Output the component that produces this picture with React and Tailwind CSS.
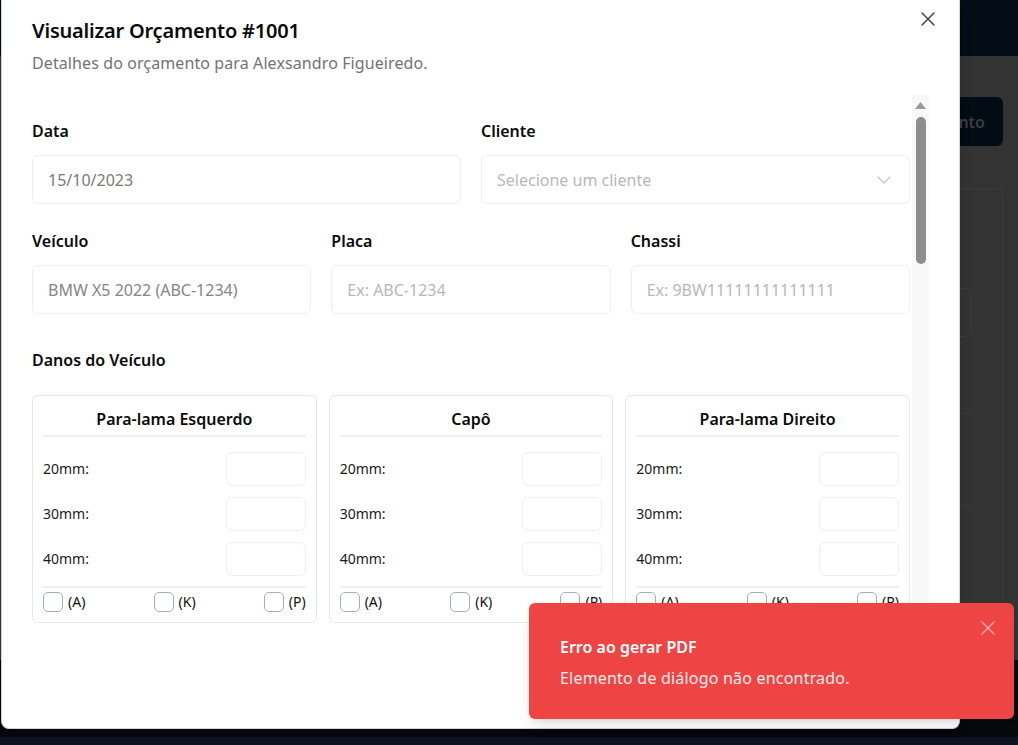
import React from "react";

const font = { fontFamily: '"Noto Sans", "Open Sans", sans-serif' };

function XIcon({ className }) {
  return (
    <svg viewBox="0 0 24 24" width="24" height="24" fill="none" stroke="currentColor" strokeWidth="1.5" strokeLinecap="round" className={className}>
      <path d="M18 6 6 18" />
      <path d="m6 6 12 12" />
    </svg>
  );
}

function ChevronDown({ className }) {
  return (
    <svg viewBox="0 0 24 24" width="24" height="24" fill="none" stroke="currentColor" strokeWidth="1.3" strokeLinecap="round" strokeLinejoin="round" className={className}>
      <path d="m6 9 6 6 6-6" />
    </svg>
  );
}

function Field({ label, children }) {
  return (
    <div className="flex flex-col gap-3">
      <div className="text-base leading-6 font-semibold text-[#0a0a0a]">{label}</div>
      {children}
    </div>
  );
}

function TextBox({ value, placeholder, muted }) {
  return (
    <div className="h-[49px] rounded-md border border-[#efefef] bg-white px-[15px] flex items-center text-base">
      {value ? (
        <span className={muted ? "text-[#7a7a7a]" : "text-[#858585]"}>{value}</span>
      ) : (
        <span className="text-[#b8b8b8]">{placeholder}</span>
      )}
    </div>
  );
}

function Checkbox({ label }) {
  return (
    <div className="flex items-center gap-[5px]">
      <div className="w-[20px] h-[20px] rounded-[5px] border-[1.5px] border-[#9fb0c3] bg-white" />
      <span className="text-sm leading-5 text-[#111]">{label}</span>
    </div>
  );
}

function DamageCard({ title }) {
  return (
    <div className="rounded-md border border-[#e5e7eb] bg-white px-[10px] pt-[11px] pb-[10px]">
      <div className="text-center text-base leading-6 font-semibold text-[#0a0a0a] pb-[4px] border-b-2 border-[#efefef]">
        {title}
      </div>
      <div className="mt-[15px] flex flex-col gap-[11px]">
        {["20mm:", "30mm:", "40mm:"].map((r) => (
          <div key={r} className="flex items-center justify-between">
            <span className="text-sm text-[#1a1a1a]">{r}</span>
            <div className="w-[80px] h-[34px] rounded-md border border-[#efefef] bg-white" />
          </div>
        ))}
      </div>
      <div className="mt-[10px] border-t-2 border-[#efefef] pt-[4px] flex items-center justify-between">
        <Checkbox label="(A)" />
        <Checkbox label="(K)" />
        <Checkbox label="(P)" />
      </div>
    </div>
  );
}

export default function App() {
  return (
    <div className="relative w-[1018px] h-[745px] overflow-hidden bg-[#333333]" style={font}>
      {/* Background page (under overlay) */}
      <div className="flex flex-col h-full">
        <div className="h-[56px] bg-[#040c16]" />
        <div className="h-[604px] bg-[#333333] pr-[15px] flex flex-col items-end">
          <div className="mt-[41px] h-[49px] rounded-md bg-[#030b15] px-[18px] flex items-center text-base font-semibold text-[#3d3d3d]">
            Novo Orçamento
          </div>
          <div className="mt-[42px] w-[900px] flex-1 rounded-t-lg border border-b-0 border-[#3b3b3b] pr-[31px] pt-[99px] flex flex-col">
            <div className="h-[49px] rounded-md border border-[#3b3b3b]" />
            <div className="mt-[76px] border-t border-[#3a3a3a]" />
            <div className="mt-[91px] border-t border-[#3a3a3a]" />
          </div>
        </div>
        <div className="h-[77px] bg-[#08090c]" />
        <div className="flex-1 bg-[#0e1321]" />
      </div>

      {/* Dialog */}
      <div className="absolute left-[1px] top-0 w-[959px] h-[729px] bg-white rounded-b-lg border border-t-0 border-[#d4d4d4] shadow-lg pl-[30px] pr-[30px] pt-[17px]">
        <div className="text-[20px] leading-[28px] font-semibold text-[#0a0a0a] tracking-[-0.2px]">
          Visualizar Orçamento #1001
        </div>
        <div className="mt-[6px] text-base leading-6 text-[#737373] tracking-[0.1px]">
          Detalhes do orçamento para Alexsandro Figueiredo.
        </div>
        <button className="absolute right-[19px] top-[7px] text-[#444]">
          <XIcon />
        </button>

        <div className="mt-[20px] h-[540px] flex">
          <div className="flex-1 mr-[2px] pt-[24px] overflow-hidden">
            <div className="grid grid-cols-2 gap-5">
              <Field label="Data">
                <TextBox value="15/10/2023" muted />
              </Field>
              <Field label="Cliente">
                <div className="h-[49px] rounded-md border border-[#efefef] bg-white pl-[15px] pr-[13px] flex items-center justify-between text-base">
                  <span className="text-[#b8b8b8]">Selecione um cliente</span>
                  <ChevronDown className="text-[#c8c8c8]" />
                </div>
              </Field>
            </div>
            <div className="mt-[25px] grid grid-cols-3 gap-5">
              <Field label="Veículo">
                <TextBox value="BMW X5 2022 (ABC-1234)" />
              </Field>
              <Field label="Placa">
                <TextBox placeholder="Ex: ABC-1234" />
              </Field>
              <Field label="Chassi">
                <TextBox placeholder="Ex: 9BW11111111111111" />
              </Field>
            </div>
            <div className="mt-[34px] text-base leading-6 font-semibold text-[#0a0a0a]">Danos do Veículo</div>
            <div className="mt-[23px] grid grid-cols-3 gap-3">
              <DamageCard title="Para-lama Esquerdo" />
              <DamageCard title="Capô" />
              <DamageCard title="Para-lama Direito" />
            </div>
          </div>
          <div className="w-[17px] bg-[#f8f8f8] flex flex-col items-center pt-[7px]">
            <svg width="11" height="7" viewBox="0 0 11 7">
              <path d="M5.5 0 L11 7 L0 7 Z" fill="#9a9a9a" />
            </svg>
            <div className="mt-[8px] w-[10px] h-[147px] rounded-full bg-[#8d8d8d]" />
          </div>
        </div>
      </div>

      {/* Toast */}
      <div className="absolute left-[529px] top-[603px] w-[485px] h-[116px] rounded-md bg-[#ef4444] shadow-lg pl-[31px] pt-[32px] text-white">
        <div className="text-base leading-6 font-semibold">Erro ao gerar PDF</div>
        <div className="mt-[7px] text-base leading-6 text-white/90 tracking-[0.2px]">Elemento de diálogo não encontrado.</div>
        <button className="absolute right-[14px] top-[13px] text-white/50">
          <XIcon />
        </button>
      </div>
    </div>
  );
}
